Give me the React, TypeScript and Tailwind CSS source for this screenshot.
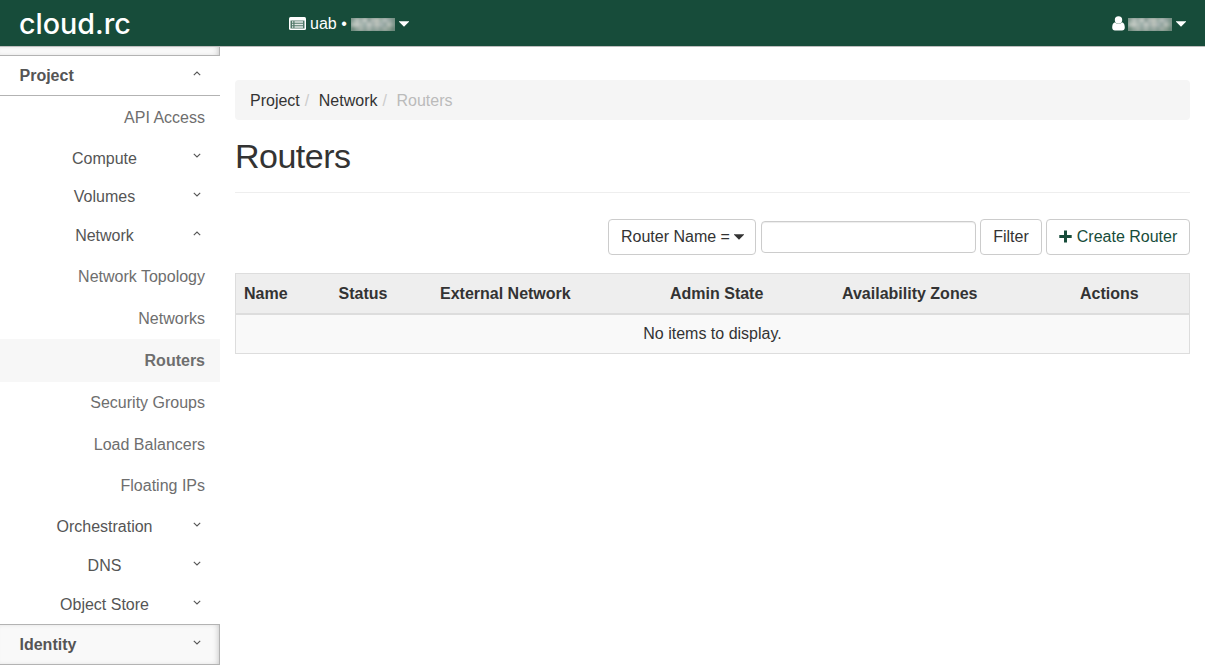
function Chevron({ up = false }: { up?: boolean }) {
  return (
    <svg className="mr-[19px] h-[5px] w-[8px] shrink-0" viewBox="0 0 8 5" fill="none" stroke="#555" strokeWidth="1.1">
      <path d={up ? "M0.8 4.2 L4 1 L7.2 4.2" : "M0.8 0.8 L4 4 L7.2 0.8"} />
    </svg>
  );
}

function Caret() {
  return (
    <svg className="h-[6px] w-[10px] shrink-0" viewBox="0 0 10 6" fill="currentColor">
      <path d="M0 .2H10V.8L5 5.800 0 .8Z" />
    </svg>
  );
}

const SHADES = [
  ["#8fa39a", "#b9c2bd", "#a3b0ab", "#c4cbc6", "#8d9f9a", "#b3bcb8", "#c0c4bd", "#9fb0a9", "#b7c0bd", "#9aa9a5", "#7f978d"],
  ["#b4bfb8", "#c8cdc8", "#b0bcb6", "#9fb0ac", "#c3c9c4", "#a6b2ae", "#bfc5be", "#aab5b4", "#93a5a0", "#bac2bb", "#8ba096"],
  ["#6f8a7e", "#94a69d", "#a7b2ac", "#90a29b", "#a9b4ae", "#8ea19a", "#9eaba5", "#8b9e97", "#a2aea6", "#8c9f93", "#6a8679"],
];

function MaskedName() {
  return (
    <svg className="h-[13px] w-[44px] shrink-0" viewBox="0 0 44 13">
      <defs>
        <filter id="soften" x="0" y="0" width="1" height="1">
          <feGaussianBlur stdDeviation="1.7" />
        </filter>
      </defs>
      <rect width="44" height="13" fill="#6f8a7e" />
      <g filter="url(#soften)">
        {SHADES.map((row, y) =>
          row.map((c, x) => <rect key={`${y}-${x}`} x={x * 4} y={y * 4.4} width="4" height="4.4" fill={c} />)
        )}
      </g>
    </svg>
  );
}

function Group({ label, open, low }: { label: string; open?: boolean; low?: boolean }) {
  return (
    <div className="flex h-[38.84px] items-center text-[#555]">
      <span className={`ml-[16px] flex-1 text-center ${low ? "pt-[2px]" : "pt-px"}`}>{label}</span>
      <span className="-mt-[5px] flex">
        <Chevron up={open} />
      </span>
    </div>
  );
}

function Item({ label, active, high }: { label: string; active?: boolean; high?: boolean }) {
  return (
    <div
      className={`flex items-center justify-end pr-[15px] text-[#6e6e6e] ${
        active ? "-mb-px h-[43px] bg-[#f7f7f7] pt-px font-bold" : high ? "h-[42px] pt-[0.5px]" : "h-[42px] pt-[2px]"
      }`}
    >
      {label}
    </div>
  );
}

export default function App() {
  return (
    <div className="flex h-[665px] w-[1205px] flex-col overflow-hidden bg-white font-['Liberation_Sans',Arial,sans-serif] text-[16px] leading-[22.84px] text-[#333]">
      <header className="flex h-[47px] shrink-0 items-center border-b border-[#bdbdbd] bg-[#174c3a] text-white">
        <div className="ml-[19px] w-[270px] pt-px [font-family:Inter,sans-serif] text-[28.7px] font-medium leading-[40px]">
          cloud.rc
        </div>
        <div className="flex items-center">
          <svg className="h-[13px] w-[17px]" viewBox="0 0 17 13">
            <rect width="17" height="13" rx="1.5" fill="white" />
            <rect x="1.5" y="3.500" width="14" height="8" fill="#4f7768" />
            <path d="M3 5h1.300M3 7.500h1.300M3 10h1.300M5.500 5H14M5.500 7.500H14M5.500 10H14" stroke="#e5ebe8" strokeWidth="1.3" />
          </svg>
          <span className="ml-[4px] pt-[2px] whitespace-pre">uab •</span>
          <span className="ml-[4px] mt-[2px] flex">
            <MaskedName />
          </span>
          <span className="ml-[4px] mt-[2px] flex">
            <Caret />
          </span>
        </div>
        <div className="ml-auto mr-[19px] flex items-center">
          <svg className="mt-px h-[15px] w-[13px]" viewBox="0 0 13 15" fill="white">
            <circle cx="6.5" cy="4" r="3.7" />
            <path d="M3 6.3C1 6.8.2 9 .2 11.5.2 13.5 1.3 14.500 3 14.500h7c1.700 0 2.800-1 2.800-3 0-2.500-.8-4.700-2.800-5.200C8 8.600 5 8.600 3 6.300Z" />
          </svg>
          <span className="ml-[3px] mt-[2px] flex">
            <MaskedName />
          </span>
          <span className="ml-[4px] mt-[2px] flex">
            <Caret />
          </span>
        </div>
      </header>
      <div className="flex min-h-0 flex-1">
        <nav className="w-[220px] shrink-0">
          <div className="h-[9px] border-r border-b border-[#b3b3b3] bg-[#f9f9f9] shadow-[inset_-3px_0_6px_-3px_#bbb]" />
          <div className="flex h-[40px] items-center justify-between border-b border-[#b3b3b3] pl-[19.5px] font-bold text-[#555]">
            <span className="pt-[2px]">Project</span>
            <span className="-mt-[5px] flex">
              <Chevron up />
            </span>
          </div>
          <div className="h-[527px] pt-px">
            <Item label="API Access" high />
            <Group label="Compute" low />
            <Group label="Volumes" />
            <Group label="Network" open />
            <Item label="Network Topology" />
            <Item label="Networks" />
            <Item label="Routers" active />
            <Item label="Security Groups" />
            <Item label="Load Balancers" />
            <Item label="Floating IPs" high />
            <Group label="Orchestration" />
            <Group label="DNS" />
            <Group label="Object Store" />
          </div>
          <div className="mt-px flex h-[41px] items-center justify-between border-y border-r border-[#b3b3b3] bg-[#f9f9f9] pl-[19.5px] font-bold text-[#555] shadow-[inset_-3px_0_6px_-3px_#bbb]">
            <span className="pt-[2px]">Identity</span>
            <span className="-mr-px -mt-[5px] flex">
              <Chevron />
            </span>
          </div>
        </nav>
        <main className="flex-1 pl-[15px] pr-[15px] pt-[33px]">
          <div className="flex h-[40px] items-center rounded-[4px] bg-[#f5f5f5] pl-[15px] pt-[2px]">
            <span>Project</span>
            <span className="w-[19px] pl-[5px] text-[#ccc]">/</span>
            <span>Network</span>
            <span className="w-[19px] pl-[5px] text-[#ccc]">/</span>
            <span className="text-[#bbb]">Routers</span>
          </div>
          <h1 className="h-[73px] border-b border-[#eee] pt-[16px] text-[34px] leading-[40px] tracking-[-0.5px]">Routers</h1>
          <div className="mt-[26px] flex h-[36px] items-center justify-end">
            <div className="flex h-[36px] w-[148px] items-center gap-[4px] rounded-[4px] border border-[#ccc] pl-[12px] whitespace-nowrap">
              Router Name = <Caret />
            </div>
            <input className="ml-[5px] h-[32px] w-[215px] rounded-[4px] border border-[#ccc] px-3 shadow-[inset_0_1px_1px_rgba(0,0,0,0.075)] outline-none" />
            <div className="ml-[4px] flex h-[36px] w-[62px] items-center justify-center rounded-[4px] border border-[#ccc]">
              Filter
            </div>
            <div className="ml-[4px] flex h-[36px] w-[144px] items-center justify-center gap-[5px] rounded-[4px] border border-[#ccc] text-[#174c3a]">
              <svg className="-mt-[2px] size-[13px] shrink-0" viewBox="0 0 13 13" fill="currentColor">
                <path d="M5 .5h3v4.500h4.700v3H8v4.500H5V8H.3V5H5Z" />
              </svg>
              Create Router
            </div>
          </div>
          <table className="mt-[18px] w-[955px] table-fixed border-separate border-spacing-0 border border-[#ddd]">
            <thead>
              <tr className="h-[41px] bg-[#eee] text-left">
                <th className="w-[95px] border-b-2 border-[#ddd] pl-[8px] pt-[2px]">Name</th>
                <th className="w-[101px] border-b-2 border-[#ddd] pl-[7.5px] pt-[2px]">Status</th>
                <th className="w-[230px] border-b-2 border-[#ddd] pl-[8px] pt-[2px]">External Network</th>
                <th className="w-[172px] border-b-2 border-[#ddd] pl-[8px] pt-[2px]">Admin State</th>
                <th className="w-[238px] border-b-2 border-[#ddd] pl-[8px] pt-[2px]">Availability Zones</th>
                <th className="border-b-2 border-[#ddd] pl-[8px] pt-[2px]">Actions</th>
              </tr>
            </thead>
            <tbody>
              <tr className="h-[38px] bg-[#f9f9f9]">
                <td colSpan={6} className="text-center">
                  No items to display.
                </td>
              </tr>
            </tbody>
          </table>
        </main>
      </div>
    </div>
  );
}
